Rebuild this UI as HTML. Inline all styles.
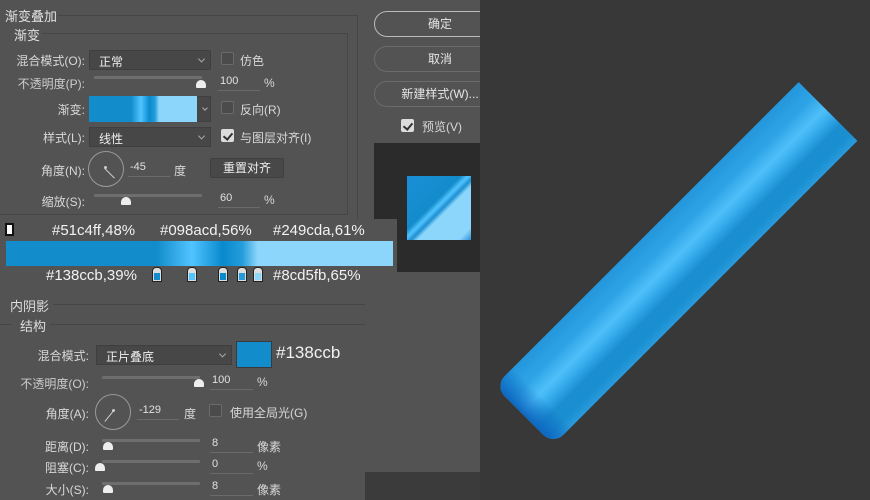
<!DOCTYPE html>
<html><head><meta charset="utf-8"><style>
*{margin:0;padding:0;box-sizing:border-box}
body{width:870px;height:500px;overflow:hidden;background:#383838;position:relative;font-family:"Liberation Sans","Noto Sans CJK SC",sans-serif;color:#d8d8d8;font-size:12px}
.a{position:absolute;white-space:nowrap}
.dlg{position:absolute;left:0;top:0;width:480px;height:500px;background:#535353}
.sel{position:absolute;background:#474747;border:1px solid #3f3f3f}
.sel:after{content:"";position:absolute;right:6px;top:50%;width:4px;height:4px;border-right:1px solid #aaa;border-bottom:1px solid #aaa;transform:translateY(-70%) rotate(45deg)}
.cb{position:absolute;width:13px;height:13px;border:1px solid #6a6a6a;border-radius:2px;background:#4b4b4b}
.cb.on{background:#dcdcdc;border-color:#dcdcdc}
.cb.on:after{content:"";position:absolute;left:3px;top:1px;width:4px;height:7px;border-right:2px solid #333;border-bottom:2px solid #333;transform:rotate(40deg)}
.sl{position:absolute;height:3px;background:#6e6e6e;border-radius:1px}
.th{position:absolute;width:10px;height:8px;background:#eee;border-radius:5px 5px 1px 1px}
.in{position:absolute;border-bottom:1px solid #6a6a6a;height:16px;font-size:11px;color:#e0e0e0;padding-left:2px}
.btn{position:absolute;left:374px;width:132px;height:26px;border:1px solid #6c6c6c;border-radius:13px;text-align:center;line-height:24px;font-size:12px;color:#e6e6e6}
.circ{position:absolute;width:36px;height:36px;border:1px solid #9a9a9a;border-radius:50%}
.lbl{position:absolute;text-align:right;white-space:nowrap}
.stop{position:absolute;top:267px;width:10px;height:15px;background:#ddd;border:1px solid #222;border-radius:4px 4px 0 0}
.stop i{position:absolute;left:1px;top:5px;width:6px;height:7px}
</style></head><body>
<div class="dlg"></div>
<!-- bar on canvas -->
<div style="position:absolute;left:461px;top:222px;width:430px;height:83px;transform:rotate(-45deg);border-radius:14px 0 0 14px;background:linear-gradient(180deg,#2496dc 0%,#2ea4e6 25%,#4fbff9 45%,#3bb0ef 55%,#1a8ed0 72%,#1a8fd0 88%,#2a9bdd 100%);overflow:hidden">
<div style="position:absolute;left:0;top:0;width:26px;height:83px;background:linear-gradient(90deg,#0d67c0,rgba(20,120,210,0));border-radius:14px 0 0 14px"></div>
</div>
<div class="a" style="left:365px;top:472px;width:115px;height:28px;background:#3b3b3b"></div>

<!-- group lines -->
<div class="a" style="left:58px;top:15px;width:300px;height:205px;border-top:1px solid #464646;border-right:1px solid #464646"></div>
<div class="a" style="left:0;top:33px;width:348px;height:182px;border:1px solid #464646;border-left:none;border-top:none"></div>
<div class="a" style="left:42px;top:33px;width:306px;border-top:1px solid #464646"></div>
<div class="a" style="left:5px;top:6px;font-size:13px;color:#e0e0e0">渐变叠加</div>
<div class="a" style="left:14px;top:25px;font-size:13px;color:#e0e0e0">渐变</div>

<div class="lbl" style="right:785px;top:52px">混合模式(O):</div>
<div class="sel" style="left:89px;top:50px;width:122px;height:20px"><span class="a" style="left:9px;top:2px;color:#eee">正常</span></div>
<div class="cb" style="left:221px;top:52px"></div><div class="a" style="left:240px;top:52px">仿色</div>

<div class="lbl" style="right:785px;top:75px;color:#ccc">不透明度(P):</div>
<div class="sl" style="left:94px;top:76px;width:108px"></div><div class="th" style="left:196px;top:80px"></div>
<div class="in" style="left:218px;top:75px;width:42px">100</div><div class="a" style="left:264px;top:76px">%</div>

<div class="lbl" style="right:785px;top:101px">渐变:</div>
<div class="a" style="left:89px;top:96px;width:122px;height:26px;background:#474747;border:1px solid #3f3f3f"></div>
<div class="a" style="left:89px;top:96px;width:108px;height:26px;background:linear-gradient(90deg,#138ccb 0%,#138ccb 39%,#51c4ff 48%,#098acd 56%,#249cda 61%,#8cd5fb 65%,#8cd5fb 100%)"></div>
<div class="a" style="left:203px;top:106px;width:4px;height:4px;border-right:1px solid #aaa;border-bottom:1px solid #aaa;transform:rotate(45deg)"></div>
<div class="cb" style="left:221px;top:101px"></div><div class="a" style="left:240px;top:101px">反向(R)</div>

<div class="lbl" style="right:785px;top:129px">样式(L):</div>
<div class="sel" style="left:89px;top:127px;width:122px;height:20px"><span class="a" style="left:9px;top:2px;color:#eee">线性</span></div>
<div class="cb on" style="left:221px;top:129px"></div><div class="a" style="left:240px;top:129px">与图层对齐(I)</div>

<div class="lbl" style="right:785px;top:162px">角度(N):</div>
<div class="circ" style="left:88px;top:151px"></div>
<div class="a" style="left:105px;top:168px;width:14px;border-top:1px solid #ccc;transform-origin:0 0;transform:rotate(45deg)"></div>
<div class="a" style="left:104px;top:166px;width:3px;height:3px;background:#ccc;border-radius:50%"></div>
<div class="in" style="left:128px;top:161px;width:42px">-45</div><div class="a" style="left:174px;top:162px">度</div>
<div class="a" style="left:210px;top:158px;width:74px;height:20px;background:#484848;border:1px solid #404040;border-radius:2px;text-align:center;line-height:18px;color:#eee">重置对齐</div>

<div class="lbl" style="right:785px;top:193px">缩放(S):</div>
<div class="sl" style="left:94px;top:194px;width:108px"></div><div class="th" style="left:121px;top:197px"></div>
<div class="in" style="left:218px;top:192px;width:42px">60</div><div class="a" style="left:264px;top:193px">%</div>

<!-- right buttons -->
<div class="a" style="left:0;top:0;width:480px;height:140px;overflow:hidden">
<div class="btn" style="top:11px;border-color:#bbb">确定</div>
<div class="btn" style="top:46px">取消</div>
<div class="btn" style="top:81px">新建样式(W)...</div>
</div>
<div class="cb on" style="left:401px;top:119px"></div><div class="a" style="left:422px;top:118px">预览(V)</div>
<div class="a" style="left:374px;top:143px;width:106px;height:129px;background:#2b2b2b"></div>
<div class="a" style="left:407px;top:176px;width:64px;height:64px;background:linear-gradient(135deg,#1a8fd8 0%,#138ccb 42%,#51c4ff 48%,#1d8fd0 53%,#8cd5fb 58%,#8cd5fb 90%,#2a8fd8 100%)"></div>

<!-- gradient editor strip -->
<div class="a" style="left:0;top:219px;width:397px;height:70px;background:#535353"></div>
<div class="a" style="left:5px;top:223px;width:9px;height:13px;background:#fff;border:2px solid #111"></div>
<div class="a" style="left:52px;top:222px;font-size:15px;color:#f2f2f2">#51c4ff,48%</div>
<div class="a" style="left:160px;top:222px;font-size:15px;color:#f2f2f2">#098acd,56%</div>
<div class="a" style="left:273px;top:222px;font-size:15px;color:#f2f2f2">#249cda,61%</div>
<div class="a" style="left:6px;top:241px;width:387px;height:25px;background:linear-gradient(90deg,#138ccb 0%,#138ccb 39%,#51c4ff 48%,#098acd 56%,#249cda 61%,#8cd5fb 65%,#8cd5fb 100%)"></div>
<div class="a" style="left:46px;top:267px;font-size:15px;color:#f2f2f2">#138ccb,39%</div>
<div class="stop" style="left:152px"><i style="background:#138ccb"></i></div>
<div class="stop" style="left:187px"><i style="background:#51c4ff"></i></div>
<div class="stop" style="left:218px"><i style="background:#098acd"></i></div>
<div class="stop" style="left:237px"><i style="background:#249cda"></i></div>
<div class="stop" style="left:253px"><i style="background:#8cd5fb"></i></div>
<div class="a" style="left:273px;top:267px;font-size:15px;color:#f2f2f2">#8cd5fb,65%</div>

<!-- inner shadow -->
<div class="a" style="left:10px;top:296px;font-size:13px;color:#ddd">内阴影</div>
<div class="a" style="left:53px;top:304px;width:312px;border-top:1px solid #464646"></div>
<div class="a" style="left:20px;top:316px;font-size:13px;color:#ddd">结构</div>
<div class="a" style="left:0;top:324px;width:12px;border-top:1px solid #464646"></div>
<div class="a" style="left:50px;top:324px;width:315px;border-top:1px solid #464646"></div>

<div class="lbl" style="right:781px;top:347px">混合模式:</div>
<div class="sel" style="left:96px;top:345px;width:136px;height:20px"><span class="a" style="left:9px;top:2px;color:#eee">正片叠底</span></div>
<div class="a" style="left:236px;top:341px;width:36px;height:27px;background:#138ccb;border:1px solid #3a3a3a"></div>
<div class="a" style="left:276px;top:343px;font-size:17px;color:#f2f2f2">#138ccb</div>

<div class="lbl" style="right:781px;top:375px;color:#ccc">不透明度(O):</div>
<div class="sl" style="left:102px;top:376px;width:98px"></div><div class="th" style="left:194px;top:379px"></div>
<div class="in" style="left:210px;top:374px;width:43px">100</div><div class="a" style="left:257px;top:375px">%</div>

<div class="lbl" style="right:781px;top:405px">角度(A):</div>
<div class="circ" style="left:95px;top:394px"></div>
<div class="a" style="left:114px;top:411px;width:14px;border-top:1px solid #ccc;transform-origin:0 0;transform:rotate(129deg)"></div>
<div class="a" style="left:112px;top:409px;width:3px;height:3px;background:#ccc;border-radius:50%"></div>
<div class="in" style="left:137px;top:404px;width:42px">-129</div><div class="a" style="left:184px;top:405px">度</div>
<div class="cb" style="left:209px;top:404px"></div><div class="a" style="left:230px;top:404px">使用全局光(G)</div>

<div class="lbl" style="right:781px;top:438px">距离(D):</div>
<div class="sl" style="left:102px;top:439px;width:98px"></div><div class="th" style="left:103px;top:442px"></div>
<div class="in" style="left:210px;top:437px;width:43px">8</div><div class="a" style="left:257px;top:438px">像素</div>

<div class="lbl" style="right:781px;top:459px">阻塞(C):</div>
<div class="sl" style="left:102px;top:460px;width:98px"></div><div class="th" style="left:95px;top:463px"></div>
<div class="in" style="left:210px;top:458px;width:43px">0</div><div class="a" style="left:257px;top:459px">%</div>

<div class="lbl" style="right:781px;top:481px">大小(S):</div>
<div class="sl" style="left:102px;top:482px;width:98px"></div><div class="th" style="left:103px;top:485px"></div>
<div class="in" style="left:210px;top:480px;width:43px">8</div><div class="a" style="left:257px;top:481px">像素</div>
</body></html>
